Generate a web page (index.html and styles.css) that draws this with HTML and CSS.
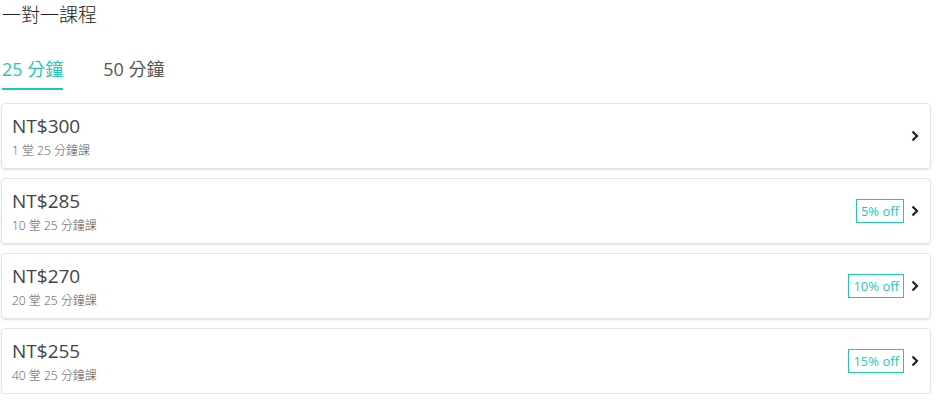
FILE: index.html
```html
<!DOCTYPE html>
<html lang="zh-Hant">
<head>
<meta charset="utf-8">
<link rel="stylesheet" href="styles.css">
</head>
<body>
<div class="page">
  <h1 class="title">一對一課程</h1>
  <div class="tabs">
    <div class="tab active">25 分鐘</div>
    <div class="tab">50 分鐘</div>
  </div>
  <div class="list">
    <div class="card">
      <div class="info">
        <div class="price">NT$300</div>
        <div class="desc">1 堂 25 分鐘課</div>
      </div>
      <div class="right">
        <svg class="chev" viewBox="0 0 8 12" width="8" height="12"><path d="M1.5 1.5 L6 6 L1.5 10.5" fill="none" stroke="#222" stroke-width="2.2"/></svg>
      </div>
    </div>
    <div class="card">
      <div class="info">
        <div class="price">NT$285</div>
        <div class="desc">10 堂 25 分鐘課</div>
      </div>
      <div class="right">
        <span class="badge">5% off</span>
        <svg class="chev" viewBox="0 0 8 12" width="8" height="12"><path d="M1.5 1.5 L6 6 L1.5 10.5" fill="none" stroke="#222" stroke-width="2.2"/></svg>
      </div>
    </div>
    <div class="card">
      <div class="info">
        <div class="price">NT$270</div>
        <div class="desc">20 堂 25 分鐘課</div>
      </div>
      <div class="right">
        <span class="badge">10% off</span>
        <svg class="chev" viewBox="0 0 8 12" width="8" height="12"><path d="M1.5 1.5 L6 6 L1.5 10.5" fill="none" stroke="#222" stroke-width="2.2"/></svg>
      </div>
    </div>
    <div class="card">
      <div class="info">
        <div class="price">NT$255</div>
        <div class="desc">40 堂 25 分鐘課</div>
      </div>
      <div class="right">
        <span class="badge">15% off</span>
        <svg class="chev" viewBox="0 0 8 12" width="8" height="12"><path d="M1.5 1.5 L6 6 L1.5 10.5" fill="none" stroke="#222" stroke-width="2.2"/></svg>
      </div>
    </div>
  </div>
</div>
</body>
</html>
```
FILE: styles.css
```css
* { box-sizing: border-box; }
html, body { margin: 0; padding: 0; background: #fff; }
body {
  font-family: "Open Sans", "Noto Sans CJK TC", sans-serif;
  color: #444;
}
.page {
  width: 931px;
  padding-left: 1px;
}
.title {
  margin: 0;
  padding-top: 2px;
  padding-left: 1px;
  font-size: 19px;
  font-weight: 300;
  line-height: 26px;
  color: #222;
}
.tabs {
  display: flex;
  gap: 40px;
  margin-top: 28px;
  padding-left: 1px;
}
.tab {
  font-size: 18px;
  line-height: 26px;
  padding-bottom: 6px;
  border-bottom: 2px solid transparent;
  color: #555;
}
.tab.active {
  color: #1ec8b7;
  border-bottom-color: #1ec8b7;
}
.list {
  display: flex;
  flex-direction: column;
  gap: 9px;
  margin-top: 13px;
}
.card {
  display: flex;
  align-items: center;
  justify-content: space-between;
  height: 66px;
  padding: 0 11px 0 10px;
  border: 1px solid #e4e4e4;
  border-radius: 4px;
  box-shadow: 0 1px 2px rgba(0,0,0,0.12);
}
.info { display: flex; flex-direction: column; }
.price {
  font-size: 19px;
  line-height: 24px;
  color: #444;
  margin-top: 1px;
}
.desc {
  font-size: 12px;
  line-height: 18px;
  font-weight: 300;
  color: #555;
  margin-top: 4px;
}
.right {
  display: flex;
  align-items: center;
  gap: 7px;
}
.badge {
  display: inline-block;
  border: 1px solid #1ec8b7;
  color: #1ec8b7;
  font-size: 13px;
  line-height: 22px;
  padding: 0 4px;
}
.chev { display: block; }
```
